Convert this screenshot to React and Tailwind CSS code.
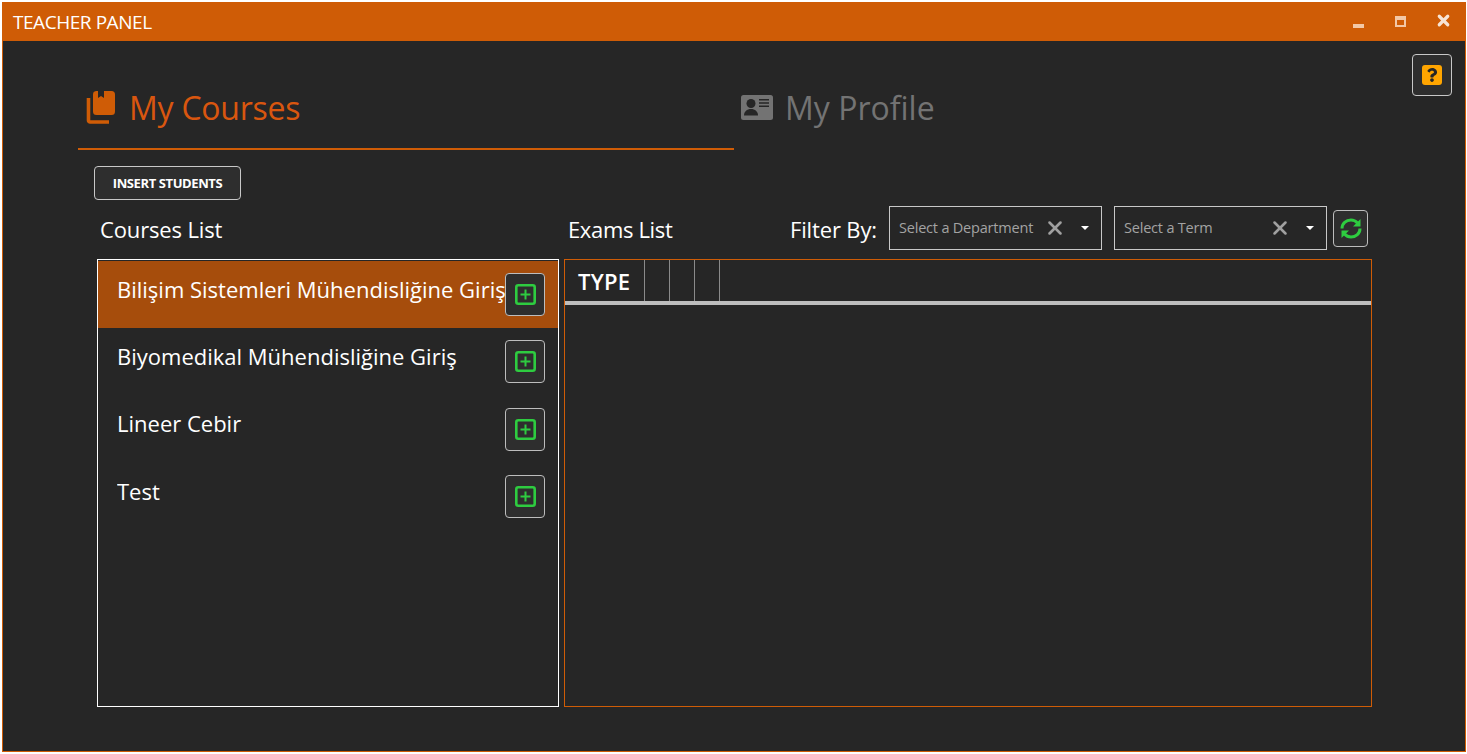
import React from 'react';
import { FaQuestion } from 'react-icons/fa';
import { X } from 'lucide-react';

const courses = [
  'Bilişim Sistemleri Mühendisliğine Giriş',
  'Biyomedikal Mühendisliğine Giriş',
  'Lineer Cebir',
  'Test',
];

const font = "[font-family:'Open_Sans','Noto_Sans',sans-serif]";

const BookIcon = () => (
  <svg width="30" height="33" viewBox="0 0 30 33" className="block">
    <path
      d="M10 0h2v7l3-2 3 2V0h7.5a3.5 3.5 0 0 1 3.5 3.5v17a3.5 3.5 0 0 1-3.5 3.5H10.5A3.5 3.5 0 0 1 7 20.5v-17A3.5 3.5 0 0 1 10 0z"
      fill="#cf5c06"
    />
    <path d="M2.5 7v22.5a1.5 1.5 0 0 0 1.5 1.500h19" fill="none" stroke="#cf5c06" strokeWidth="3.6" />
  </svg>
);

const IdCardIcon = () => (
  <svg width="32" height="25" viewBox="0 0 32 25" className="block">
    <rect width="32" height="25" rx="2.5" fill="#737373" />
    <circle cx="10" cy="8.5" r="4.5" fill="#262626" />
    <path d="M3 20.5c0-4 3-6.500 7-6.500s7 2.500 7 6.500z" fill="#262626" />
    <path d="M18 4h10v1.500H18zM18 7.200h10v1.500H18zM18 10.400h10v1.500H18z" fill="#262626" />
  </svg>
);

const SyncIcon = () => (
  <svg width="22" height="21" viewBox="0 0 22 21" fill="none" className="block">
    <path d="M2 10.500C2 5.500 6 2 11 2c2.800 0 4.800 1 6.500 3" stroke="#2ecc40" strokeWidth="3" />
    <path d="M20.500 1v7.500H13z" fill="#2ecc40" />
    <path d="M20 10.500c0 5-4 8.500-9 8.500-2.800 0-4.800-1-6.500-3" stroke="#2ecc40" strokeWidth="3" />
    <path d="M1.500 20v-7.500H9z" fill="#2ecc40" />
  </svg>
);

const PlusBox = () => (
  <svg width="21" height="21" viewBox="0 0 21 21" fill="none" className="block">
    <rect x="1.3" y="1.3" width="18.4" height="18.4" rx="2" stroke="#2ecc40" strokeWidth="2.6" />
    <path d="M10.500 5.500v10M5.500 10.500h10" stroke="#2ecc40" strokeWidth="2" />
  </svg>
);

const Select = ({ label }) => (
  <div className="w-[213px] h-[44px] border border-[#c8c8c8] flex items-center pl-[9px] pr-[12px]">
    <span className="text-[14.5px] text-[#a3a3a3] tracking-[-0.2px] whitespace-nowrap">{label}</span>
    <X size={22} strokeWidth={2.8} className="ml-auto text-[#a0a0a0]" />
    <span className="ml-[15px] w-0 h-0 border-x-[4px] border-x-transparent border-t-[4px] border-t-white" />
  </div>
);

const AddButton = () => (
  <button className="w-[40px] h-[43px] shrink-0 rounded-[4px] border border-[#bdbdbd] bg-[#2e2e2e] flex items-center justify-center">
    <PlusBox />
  </button>
);

export default function App() {
  return (
    <div className={`h-screen bg-white pl-[2px] pr-[1px] pt-[2px] pb-[2px] ${font}`}>
      <div className="h-full flex flex-col bg-[#262626] border-l border-r border-b border-[#cf5c06]">
        <div className="h-[39px] shrink-0 bg-[#cf5c06] flex items-center pl-[11px] -ml-px -mr-px">
          <span className="text-[19px] text-white tracking-[-0.45px] mt-[2px]">TEACHER PANEL</span>
          <div className="ml-auto flex items-center">
            <span className="w-[11px] h-[4px] bg-[#f3c8a6] mt-[8px] mr-[31px]" />
            <span className="w-[11px] h-[11px] border-2 border-t-[4px] border-[#f3c8a6] mb-[1px] mr-[29px]" />
            <X size={17} strokeWidth={4.5} className="text-[#f7e4d4] mb-[2px] mr-[14px]" />
          </div>
        </div>

        <div className="flex items-start pl-[75px] pr-[13px] h-[109px] shrink-0">
          <div className="w-[656px] h-[109px] border-b-2 border-[#cf5c06] flex items-center pl-[8px] gap-[13px] pt-[26px]">
            <BookIcon />
            <span className="text-[32px] text-[#d9560f] tracking-[-0.25px]">My Courses</span>
          </div>
          <div className="flex items-center pl-[7px] gap-[12px] h-[107px] pt-[26px]">
            <IdCardIcon />
            <span className="text-[32px] text-[#737373]">My Profile</span>
          </div>
          <button className="ml-auto mt-[13px] w-[40px] h-[42px] rounded-[4px] border border-[#c8c8c8] bg-[#2e2e2e] flex items-center justify-center">
            <span className="w-[20px] h-[20px] rounded-[3px] bg-[#ffa500] flex items-center justify-center">
              <FaQuestion size={14} className="text-[#262626]" />
            </span>
          </button>
        </div>

        <div className="pl-[91px] pt-[16px]">
          <button className="w-[147px] h-[34px] pt-px rounded-[4px] border border-[#c8c8c8] bg-[#2e2e2e] text-[13px] font-bold text-white tracking-[-0.4px]">
            INSERT STUDENTS
          </button>
        </div>

        <div className="flex items-start h-[50px] mt-[5px] pl-[97px]">
          <span className="text-[22px] text-white tracking-[-0.15px] w-[468px] mt-[8px]">Courses List</span>
          <span className="text-[22px] text-white tracking-[-0.35px] w-[222px] mt-[8px]">Exams List</span>
          <span className="text-[22px] text-white tracking-[-0.15px] w-[99px] mt-[8px] whitespace-nowrap">Filter By:</span>
          <div className="mt-[1px]">
            <Select label="Select a Department" />
          </div>
          <div className="w-[12px]" />
          <div className="mt-[1px]">
            <Select label="Select a Term" />
          </div>
          <button className="ml-[6px] mt-[5px] w-[35px] h-[37px] rounded-[4px] border border-[#bdbdbd] bg-[#2e2e2e] flex items-center justify-center">
            <SyncIcon />
          </button>
        </div>

        <div className="flex pl-[94px] mt-[4px] gap-[5px]">
          <div className="w-[462px] h-[448px] border border-white pt-px">
            {courses.map((c, i) => (
              <div
                key={c}
                className={`h-[67.3px] flex items-center pl-[19px] pr-[13px] ${i === 0 ? 'bg-[#a64d0c]' : ''}`}
              >
                <span className="flex-1 min-w-0 overflow-hidden whitespace-nowrap text-[22px] text-white -mt-[11px]">{c}</span>
                <AddButton />
              </div>
            ))}
          </div>
          <div className="w-[808px] h-[448px] border border-[#cf5c06]">
            <div className="h-[45px] flex border-b-[4px] border-[#bdbdbd]">
              <div className="w-[80px] border-r border-[#8a8a8a] flex items-center pl-[13px] pt-[1px]">
                <span className="text-[22px] font-semibold text-white tracking-[0.3px]">TYPE</span>
              </div>
              <div className="w-[25px] border-r border-[#8a8a8a]" />
              <div className="w-[25px] border-r border-[#8a8a8a]" />
              <div className="w-[25px] border-r border-[#8a8a8a]" />
            </div>
          </div>
        </div>
      </div>
    </div>
  );
}
